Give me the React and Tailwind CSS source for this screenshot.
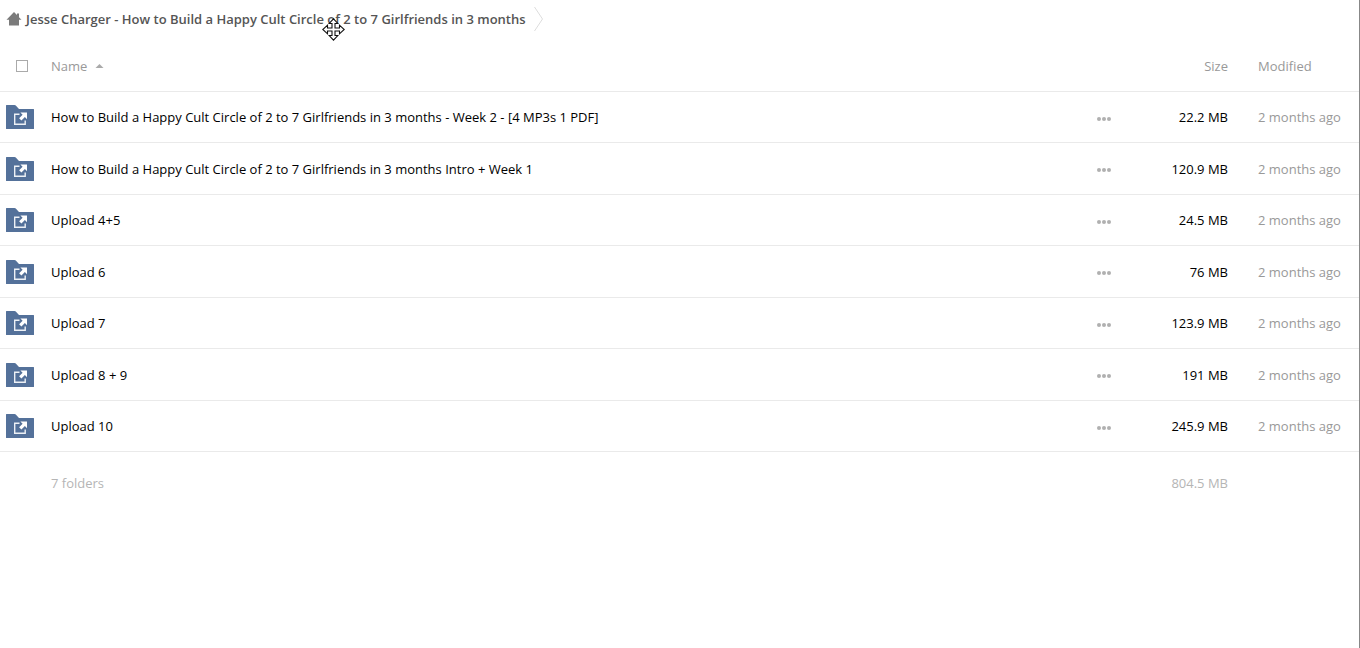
import clsx from 'clsx';

const folders = [
  { name: 'How to Build a Happy Cult Circle of 2 to 7 Girlfriends in 3 months - Week 2 - [4 MP3s 1 PDF]', size: '22.2 MB', modified: '2 months ago' },
  { name: 'How to Build a Happy Cult Circle of 2 to 7 Girlfriends in 3 months Intro + Week 1', size: '120.9 MB', modified: '2 months ago' },
  { name: 'Upload 4+5', size: '24.5 MB', modified: '2 months ago' },
  { name: 'Upload 6', size: '76 MB', modified: '2 months ago' },
  { name: 'Upload 7', size: '123.9 MB', modified: '2 months ago' },
  { name: 'Upload 8 + 9', size: '191 MB', modified: '2 months ago' },
  { name: 'Upload 10', size: '245.9 MB', modified: '2 months ago' }
];

const HomeIcon = () => (
  <svg width="16" height="14" viewBox="0 0 16 14" fill="#7b7b7b" aria-hidden="true">
    <path d="M8 0 L0.5 7.8 H3 V13.5 H13 V7.8 H15.5 L13 5.2 V1.5 H11 V3.1 Z" />
  </svg>
);

const CrumbArrow = () => (
  <svg className="ml-2" width="10" height="26" viewBox="0 0 10 26" fill="none" stroke="#dddddd" aria-hidden="true">
    <path d="M0.5 1 L8.5 13 L0.5 25" />
  </svg>
);

const FolderIcon = () => (
  <svg className="ml-1.5" width="28" height="24" viewBox="0 0 28 24" aria-hidden="true">
    <path d="M0 0.5 Q0 0 0.5 0 H8.5 Q9.3 0 9.8 0.6 L12.5 3.5 Q13 4 13.7 4 H27.5 Q28 4 28 4.5 V23.5 Q28 24 27.5 24 H0.5 Q0 24 0 23.5 Z" fill="#54719a" />
    <path d="M13.5 9.3 H8.7 V19.2 H19.2 V15.5" fill="none" stroke="#edf1f6" strokeWidth="1.4" />
    <path d="M14.4 7.5 H21 V14.2 L18.9 12.1 L15.4 15.5 L13.1 13.3 L16.6 9.8 Z" fill="#fff" />
  </svg>
);

const MoreIcon = () => (
  <svg width="14" height="4" viewBox="0 0 14 4" fill="#b0b0b0" aria-hidden="true">
    <circle cx="2" cy="2" r="2" />
    <circle cx="7" cy="2" r="2" />
    <circle cx="12" cy="2" r="2" />
  </svg>
);

const MoveCursor = () => (
  <svg className="pointer-events-none absolute top-[18px] left-[322px]" width="23" height="23" viewBox="0 0 23 23" aria-hidden="true">
    <path
      d="M11.5 0.8 L15.8 5.5 H13 V10 H17.5 V7.2 L22.2 11.5 L17.5 15.8 V13 H13 V17.5 H15.8 L11.5 22.2 L7.2 17.5 H10 V13 H5.5 V15.8 L0.8 11.5 L5.5 7.2 V10 H10 V5.5 H7.2 Z"
      fill="#fff"
      stroke="#111"
      strokeWidth="1.1"
    />
  </svg>
);

const App = () => {
  return (
    <div className="relative min-h-screen border-r border-[#888888] bg-white font-['Open_Sans',sans-serif] text-[13px] leading-5 text-black">
      <nav className="flex h-10 items-center pb-0.5 pl-1.5" aria-label="Breadcrumb">
        <a href="#" className="flex items-center gap-1 font-semibold text-[#555555]">
          <HomeIcon />
          <span>Jesse Charger - How to Build a Happy Cult Circle of 2 to 7 Girlfriends in 3 months</span>
        </a>
        <CrumbArrow />
      </nav>

      <table className="w-full table-fixed border-separate border-spacing-0">
        <thead className="text-[#999999]">
          <tr className="h-[52px] *:border-b *:border-[#eaeaea] *:font-normal">
            <th className="w-[51px] pl-4 text-left">
              <input
                type="checkbox"
                aria-label="Select all"
                className="block size-3 appearance-none border border-[#aaaaaa] bg-white checked:bg-[#54719a]"
              />
            </th>
            <th className="text-left">
              <button type="button" className="flex items-center gap-2">
                Name
                <svg width="9" height="5" viewBox="0 0 9 5" fill="#aaaaaa" aria-hidden="true">
                  <path d="M4.5 1 L8.5 5 H0.5 Z" />
                </svg>
              </button>
            </th>
            <th className="w-[60px]" aria-label="Actions" />
            <th className="w-[120px] pr-[30px] text-right">Size</th>
            <th className="w-[101px] text-left">Modified</th>
          </tr>
        </thead>
        <tbody>
          {folders.map((folder, index) => (
            <tr
              key={folder.name}
              className={clsx('*:border-b *:border-[#eaeaea]', index % 2 ? 'h-[52px]' : 'h-[51px]')}
            >
              <td>
                <FolderIcon />
              </td>
              <td>
                <a href="#" className="block truncate">{folder.name}</a>
              </td>
              <td>
                <button type="button" aria-label={`Actions for ${folder.name}`} className="ml-[19px] block pt-[3px]">
                  <MoreIcon />
                </button>
              </td>
              <td className="pr-[30px] text-right">{folder.size}</td>
              <td className="text-[#999999]">{folder.modified}</td>
            </tr>
          ))}
        </tbody>
        <tfoot className="text-[#b5b5b5]">
          <tr className="h-[62px]">
            <td />
            <td>7 folders</td>
            <td />
            <td className="pr-[30px] text-right">804.5 MB</td>
            <td />
          </tr>
        </tfoot>
      </table>

      <MoveCursor />
    </div>
  );
};

export default App;
